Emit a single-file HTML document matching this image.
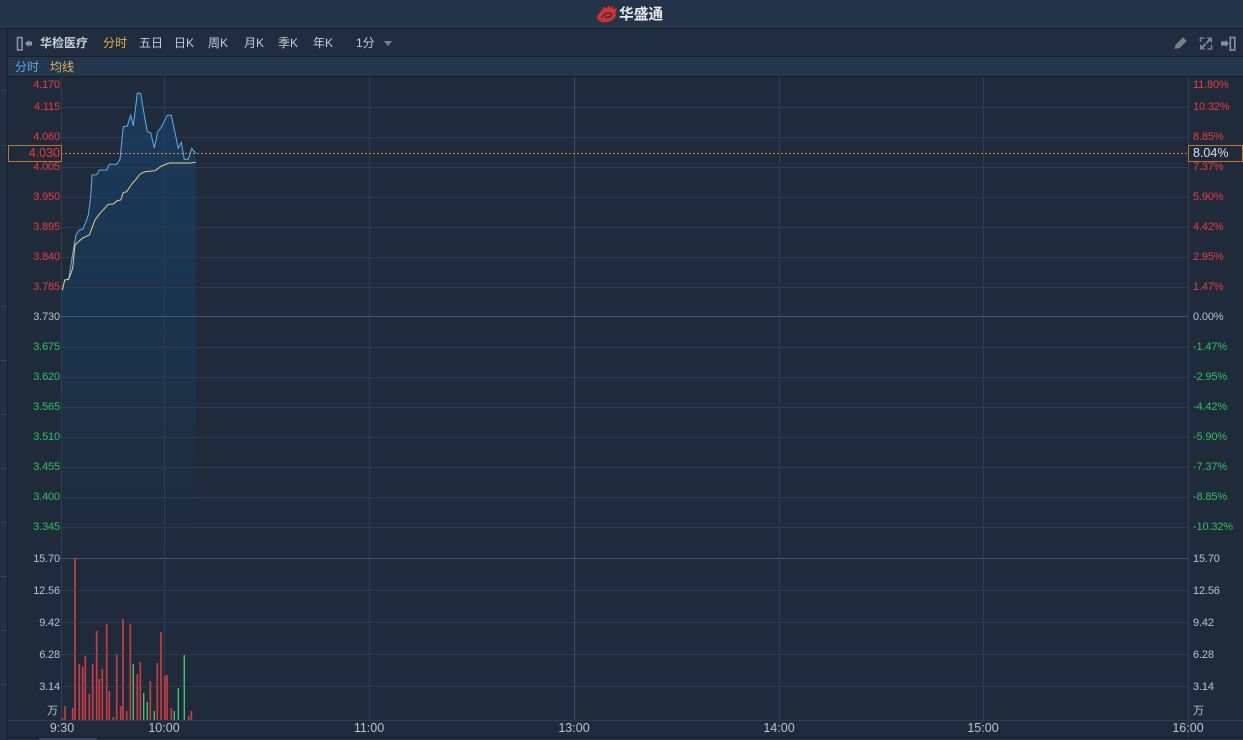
<!DOCTYPE html>
<html><head><meta charset="utf-8"><style>
html,body{margin:0;padding:0;background:#1f2b3a;width:1243px;height:740px;overflow:hidden}
svg{display:block}
text{font-family:"Liberation Sans","Noto Sans CJK SC",sans-serif;font-size:11px;letter-spacing:-.15px}
.r{fill:#ee3b3b}.g{fill:#2cc45e}.w{fill:#b9c3cf}
.tb{font-size:12px;fill:#c3ccd8;letter-spacing:0}
.rb{stroke:#c53d42;stroke-width:1.7}
.gb{stroke:#42c26e;stroke-width:1.4}
.t{font-size:12.500px;fill:#b9c3cf;letter-spacing:0}
</style></head><body>
<svg width="1243" height="740" viewBox="0 0 1243 740" xmlns="http://www.w3.org/2000/svg">
<defs><linearGradient id="a" x1="0" y1="93" x2="0" y2="558" gradientUnits="userSpaceOnUse"><stop offset="0" stop-color="#1a3b5c"/><stop offset=".48" stop-color="#1b344d"/><stop offset=".74" stop-color="#1e2f42"/><stop offset="1" stop-color="#1f2b3a"/></linearGradient></defs>
<rect width="1243" height="740" fill="#1f2b3a"/>
<!-- header -->
<rect width="1243" height="28" fill="#243449"/>
<rect y="28" width="1243" height="1" fill="#141d28"/>
<rect x="8" y="29" width="1235" height="27" fill="#202d3e"/>
<rect x="8" y="56" width="1235" height="1" fill="#162029"/>
<rect x="8" y="57" width="1235" height="19" fill="#24364b"/>
<rect x="8" y="76" width="1235" height="1" fill="#141d28"/>
<rect x="0" y="29" width="7" height="711" fill="#222f40"/>
<rect x="7" y="29" width="1" height="711" fill="#161f2a"/>
<g fill="#2f3e52"><rect x="0" y="90" width="7" height="1"/><rect x="0" y="145" width="7" height="1"/><rect x="0" y="306" width="7" height="1"/><rect x="0" y="360" width="7" height="1"/><rect x="0" y="414" width="7" height="1"/><rect x="0" y="468" width="7" height="1"/><rect x="0" y="522" width="7" height="1"/><rect x="0" y="576" width="7" height="1"/><rect x="0" y="630" width="7" height="1"/><rect x="0" y="684" width="7" height="1"/></g>
<!-- logo -->
<g>
<path d="M600 11 L603 9 L603.500 6.500 L606 8.500 L609 5.500 L610 8 L613.500 6 L613 9 L617 8.500 L615.500 11.500 L618 12 L612 13 Q605 12 600 11Z" fill="#d8302c"/>
<ellipse cx="606.500" cy="16" rx="9.500" ry="6" fill="#d8302c" transform="rotate(-14 606.500 16)"/>
<path d="M601.500 17.500 Q604 13.500 609 13 Q612.500 13.500 611 16 Q608 18.500 605 17" fill="none" stroke="#243449" stroke-width="1.600"/>
<text x="619" y="19" style="font-size:14.700px;font-weight:700;letter-spacing:0" fill="#e8ebef">华盛通</text>
</g>
<!-- toolbar -->
<rect x="17.500" y="37.500" width="4.500" height="12.500" fill="none" stroke="#8a94a1" stroke-width="1.600"/>
<path d="M25 43.500 L28.500 40 V41.500 H32 V45.500 H28.500 V47Z" fill="#8a94a1"/>
<text x="40" y="47" class="tb" style="font-weight:700;fill:#c6cfda">华检医疗</text>
<text x="103" y="47" class="tb" style="fill:#e8a94a">分时</text>
<text x="139" y="47" class="tb">五日</text>
<text x="174" y="47" class="tb">日K</text>
<text x="208" y="47" class="tb">周K</text>
<text x="244" y="47" class="tb">月K</text>
<text x="278" y="47" class="tb">季K</text>
<text x="313" y="47" class="tb">年K</text>
<text x="356" y="47" class="tb">1分</text>
<path d="M384 41 H392 L388 46Z" fill="#77828f"/>
<path d="M1174.500 49 L1175.800 44.500 L1183 37.300 L1186.800 41 L1179.500 48Z" fill="#77828f"/>
<g fill="none" stroke="#77828f" stroke-width="1.600"><path d="M1200.500 42 V38 H1204.500M1211.500 45 V49 H1207.500"/></g>
<path d="M1206.500 37.500 H1212 V43 L1210 41 L1207 44 L1205.500 42.500 L1208.500 39.500ZM1205.500 49.500 H1200 V44 L1202 46 L1205 43 L1206.500 44.500 L1203.500 47.500Z" fill="#77828f"/>
<path d="M1229 43.500 L1225.500 40 V41.500 H1221 V45.500 H1225.500 V47Z" fill="#8a94a1"/>
<rect x="1230.300" y="37.500" width="4.500" height="12.500" fill="none" stroke="#8a94a1" stroke-width="1.600"/>
<text x="15" y="71" class="tb" style="fill:#5ba8e6">分时</text>
<text x="50" y="71" class="tb" style="fill:#e3b35a">均线</text>
<!-- area -->
<path d="M61 558 V290 L62.300 290 64.700 280 68.700 279.300 70.700 266.700 73.300 250 76 235 79.300 230 82.700 229.300 86 221.700 88.300 215 90.700 196.700 92 175 96.700 174.700 99.300 170 106.700 170 109.300 164.300 116.700 164.300 120 159.300 123.300 126.700 127.300 126 130.700 115.300 133.300 126 137.300 93.300 140.700 93.300 144 113.300 147.300 131.700 150.700 132.700 154.300 148.300 157.700 131.700 161 127.700 167.300 115.300 171.300 115.300 178.300 148.300 181.300 142.300 184.300 159.300 188.300 159.300 191.700 148.300 195.700 153.300 V558Z" fill="url(#a)"/>
<!-- grid -->
<g stroke="#2b3a4e" stroke-width="1">
<path d="M61 107.500H1188M61 137.500H1188M61 167.500H1188M61 197.500H1188M61 227.500H1188M61 257.500H1188M61 287.500H1188M61 347.500H1188M61 377.500H1188M61 407.500H1188M61 437.500H1188M61 467.500H1188M61 497.500H1188M61 527.500H1188M61 590.500H1188M61 622.500H1188M61 654.500H1188M61 686.500H1188"/>
<path d="M164.500 77V720M369.500 77V720M779.500 77V720M983.500 77V720" stroke="#2d3c51"/>
<path d="M61.500 77V720M1188.500 77V740" stroke="#2f3e54"/>
<path d="M574.500 77V720" stroke="#3c4b60"/>
</g>
<path d="M61 316.500H1188" stroke="#42566f"/>
<path d="M61 558.500H1188" stroke="#42526a"/>
<path d="M8 720.500H1243" stroke="#2d3c50"/>
<path d="M8 737.500H1243" stroke="#161f2a"/>
<rect x="39" y="738" width="58" height="2" fill="#3a4859"/>
<!-- lines -->
<polyline fill="none" stroke="#62aee8" stroke-width="1" points="62.300,290 64.700,280 68.700,279.300 70.700,266.700 73.300,250 76,235 79.300,230 82.700,229.300 86,221.700 88.300,215 90.700,196.700 92,175 96.700,174.700 99.300,170 106.700,170 109.300,164.300 116.700,164.300 120,159.300 123.300,126.700 127.300,126 130.700,115.300 133.300,126 137.300,93.300 140.700,93.300 144,113.300 147.300,131.700 150.700,132.700 154.300,148.300 157.700,131.700 161,127.700 167.300,115.300 171.300,115.300 178.300,148.300 181.300,142.300 184.300,159.300 188.300,159.300 191.700,148.300 195.700,153.300"/>
<polyline fill="none" stroke="#e8cf85" stroke-width="1" points="62.300,290 64.700,280 68.700,279.300 72.700,268.300 75,245 78.300,241.700 83.300,237.700 89.300,235 95,220 100,213.300 108.300,204.300 113.300,204 116.700,201 120.700,200 123.300,192.700 126.700,191.700 131.700,184 136,179.300 140,174 145,171.700 155,170.700 161.700,166 169.300,163 190,163 195.700,162.300"/>
<path d="M61 153.500H1188" stroke="#c9863c" stroke-dasharray="2 2" fill="none"/>
<rect x="8.500" y="145.500" width="53" height="16" fill="#1f2b3a" stroke="#b8762f"/>
<rect x="1188.500" y="145.500" width="54" height="16" fill="#1f2b3a" stroke="#b8762f"/>
<!-- volume -->
<path class="rb" d="M62.500 720V718M65 720V706M72.700 720V708M75 720V558M79.300 720V664M82.700 720V666.700M85.300 720V656M89.300 720V694M92.700 720V664M96.700 720V631M99.300 720V679M102.300 720V669M106.700 720V624M109.300 720V691M113.300 720V717M116.700 720V654M120.700 720V706M123 720V619M126.700 720V711M130.300 720V624M137.300 720V674M140.300 720V662M150.300 720V681M157.300 720V663M161 720V632M164.700 720V676M167 720V675M171.300 720V708M188.700 720V716M191.300 720V711"/>
<path class="gb" d="M133.300 720V664M143.700 720V693M147.300 720V702M154.300 720V711M174.300 720V711M178.300 720V688M184.300 720V655"/>
<!-- left labels -->
<g text-anchor="end">
<g class="r"><text x="60" y="88">4.170</text><text x="60" y="110">4.115</text><text x="60" y="140">4.060</text><text x="60" y="170">4.005</text><text x="60" y="200">3.950</text><text x="60" y="230">3.895</text><text x="60" y="260">3.840</text><text x="60" y="290">3.785</text></g>
<text x="60" y="320" class="w">3.730</text>
<g class="g"><text x="60" y="350">3.675</text><text x="60" y="380">3.620</text><text x="60" y="410">3.565</text><text x="60" y="440">3.510</text><text x="60" y="470">3.455</text><text x="60" y="500">3.400</text><text x="60" y="530">3.345</text></g>
<g class="w"><text x="60" y="562">15.70</text><text x="60" y="594">12.56</text><text x="60" y="626">9.42</text><text x="60" y="658">6.28</text><text x="60" y="690">3.14</text><text x="58" y="714">万</text></g>
<text x="60" y="157" style="font-size:12.500px;letter-spacing:0" fill="#ee3b3b">4.030</text>
</g>
<!-- right labels -->
<g class="r"><text x="1193" y="88">11.80%</text><text x="1193" y="110">10.32%</text><text x="1193" y="140">8.85%</text><text x="1193" y="170">7.37%</text><text x="1193" y="200">5.90%</text><text x="1193" y="230">4.42%</text><text x="1193" y="260">2.95%</text><text x="1193" y="290">1.47%</text></g>
<text x="1193" y="320" class="w">0.00%</text>
<g class="g"><text x="1193" y="350">-1.47%</text><text x="1193" y="380">-2.95%</text><text x="1193" y="410">-4.42%</text><text x="1193" y="440">-5.90%</text><text x="1193" y="470">-7.37%</text><text x="1193" y="500">-8.85%</text><text x="1193" y="530">-10.32%</text></g>
<g class="w"><text x="1193" y="562">15.70</text><text x="1193" y="594">12.56</text><text x="1193" y="626">9.42</text><text x="1193" y="658">6.28</text><text x="1193" y="690">3.14</text><text x="1193" y="714">万</text></g>
<text x="1193" y="157" style="font-size:12.500px;letter-spacing:0" fill="#d5e0ee">8.04%</text>
<!-- time -->
<g text-anchor="middle"><text x="62" y="732" class="t">9:30</text><text x="164" y="732" class="t">10:00</text><text x="369" y="732" class="t">11:00</text><text x="574" y="732" class="t">13:00</text><text x="779" y="732" class="t">14:00</text><text x="983" y="732" class="t">15:00</text><text x="1188" y="732" class="t">16:00</text></g>
</svg>
</body></html>
